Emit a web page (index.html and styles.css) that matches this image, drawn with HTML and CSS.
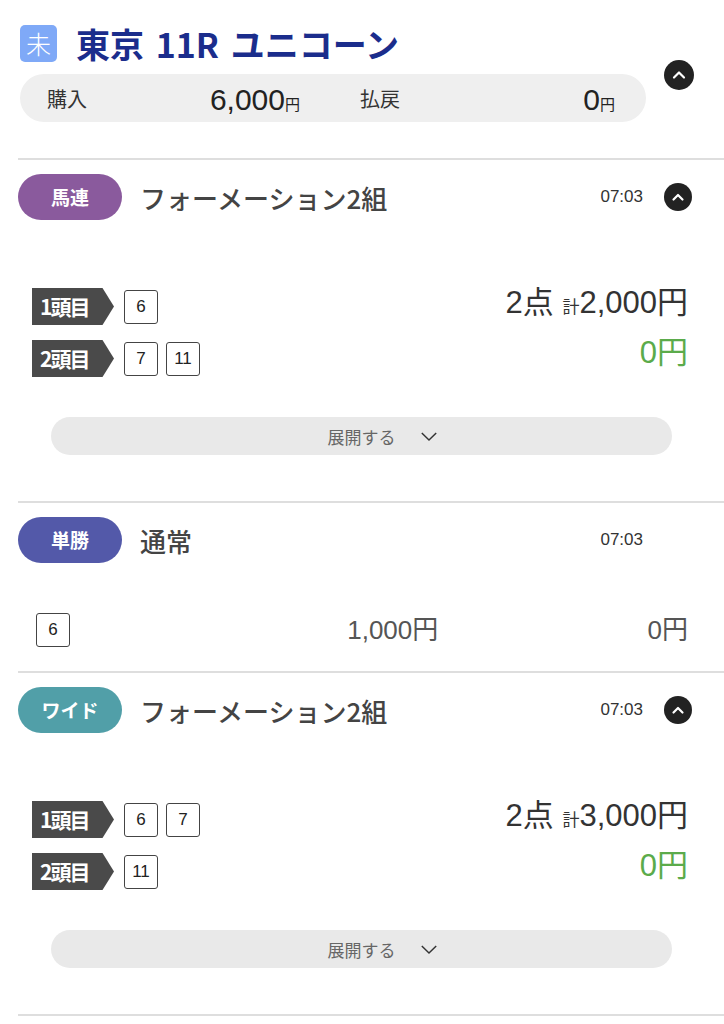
FILE: index.html
```html
<!DOCTYPE html>
<html lang="ja">
<head>
    <meta charset="UTF-8">
    <meta name="viewport" content="width=device-width, initial-scale=1.0">
    <title>東京 11R ユニコーン</title>
    <link rel="stylesheet" href="styles.css">
</head>
<body>

    <div class="race-head">
        <div class="race-main">
            <div class="race-title">
                <span class="status-badge">未</span>
                <h1>東京 11R ユニコーン</h1>
            </div>
            <div class="summary">
                <div class="summary-cell">
                    <span class="summary-label">購入</span>
                    <span class="summary-value">6,000<small>円</small></span>
                </div>
                <div class="summary-cell">
                    <span class="summary-label">払戻</span>
                    <span class="summary-value">0<small>円</small></span>
                </div>
            </div>
        </div>
        <button class="toggle toggle-big">
            <svg viewBox="0 0 30 30" width="30" height="30"><circle cx="15" cy="15" r="15" fill="#222"/><path d="M10 17.5 L15 12.5 L20 17.5" fill="none" stroke="#fff" stroke-width="2.2" stroke-linecap="round" stroke-linejoin="round"/></svg>
        </button>
    </div>

    <!-- 馬連 -->
    <div class="bet">
        <div class="bet-head">
            <span class="bet-type umaren">馬連</span>
            <span class="bet-name">フォーメーション2組</span>
            <span class="bet-time">07:03</span>
            <button class="toggle">
                <svg viewBox="0 0 28 28" width="28" height="28"><circle cx="14" cy="14" r="14" fill="#222"/><path d="M9.5 16.5 L14 12 L18.5 16.5" fill="none" stroke="#fff" stroke-width="2.2" stroke-linecap="round" stroke-linejoin="round"/></svg>
            </button>
        </div>
        <div class="bet-body">
            <div class="picks">
                <div class="pick-row">
                    <span class="pick-tag">1頭目</span>
                    <span class="horse">6</span>
                </div>
                <div class="pick-row">
                    <span class="pick-tag">2頭目</span>
                    <span class="horse">7</span>
                    <span class="horse">11</span>
                </div>
            </div>
            <div class="amounts">
                <div class="amount-total">2点 <small>計</small>2,000円</div>
                <div class="amount-pay">0円</div>
            </div>
        </div>
        <button class="expand">展開する
            <svg viewBox="0 0 20 12" width="18" height="11"><path d="M2 2 L10 10 L18 2" fill="none" stroke="#333" stroke-width="1.6"/></svg>
        </button>
    </div>

    <!-- 単勝 -->
    <div class="bet">
        <div class="bet-head">
            <span class="bet-type tansho">単勝</span>
            <span class="bet-name">通常</span>
            <span class="bet-time">07:03</span>
            <span class="toggle-space"></span>
        </div>
        <div class="single-row">
            <span class="horse">6</span>
            <span class="single-amount">1,000円</span>
            <span class="single-pay">0円</span>
        </div>
    </div>

    <!-- ワイド -->
    <div class="bet">
        <div class="bet-head">
            <span class="bet-type wide">ワイド</span>
            <span class="bet-name">フォーメーション2組</span>
            <span class="bet-time">07:03</span>
            <button class="toggle">
                <svg viewBox="0 0 28 28" width="28" height="28"><circle cx="14" cy="14" r="14" fill="#222"/><path d="M9.5 16.5 L14 12 L18.5 16.5" fill="none" stroke="#fff" stroke-width="2.2" stroke-linecap="round" stroke-linejoin="round"/></svg>
            </button>
        </div>
        <div class="bet-body">
            <div class="picks">
                <div class="pick-row">
                    <span class="pick-tag">1頭目</span>
                    <span class="horse">6</span>
                    <span class="horse">7</span>
                </div>
                <div class="pick-row">
                    <span class="pick-tag">2頭目</span>
                    <span class="horse">11</span>
                </div>
            </div>
            <div class="amounts">
                <div class="amount-total">2点 <small>計</small>3,000円</div>
                <div class="amount-pay">0円</div>
            </div>
        </div>
        <button class="expand">展開する
            <svg viewBox="0 0 20 12" width="18" height="11"><path d="M2 2 L10 10 L18 2" fill="none" stroke="#333" stroke-width="1.6"/></svg>
        </button>
    </div>

</body>
</html>
```

FILE: styles.css
```css
body {
    font-family: 'Liberation Sans', 'Noto Sans CJK JP', sans-serif;
    background-color: #ffffff;
    color: #333;
    margin: 0;
}

button {
    font-family: inherit;
    border: none;
    background: none;
    padding: 0;
    cursor: pointer;
}

/* Race header */
.race-head {
    display: flex;
    align-items: flex-start;
    height: 133px;
    margin-left: 18px;
    padding: 25px 30px 0 2px;
    border-bottom: 2px solid #dedede;
}

.race-main {
    width: 626px;
}

.race-title {
    display: flex;
    align-items: center;
    gap: 19px;
    height: 37px;
}

.status-badge {
    width: 37px;
    height: 37px;
    border-radius: 5px;
    background-color: #7fa9f7;
    color: #fff;
    font-family: 'Noto Sans CJK JP', sans-serif;
    font-size: 25px;
    font-weight: 300;
    line-height: 37px;
    text-align: center;
}

h1 {
    margin: 0;
    font-family: 'Noto Sans CJK JP', sans-serif;
    font-size: 34px;
    font-weight: 700;
    color: #1b2d8c;
    line-height: 37px;
    word-spacing: 4px;
}

.summary {
    margin-top: 12px;
    height: 48px;
    border-radius: 24px;
    background-color: #efefef;
    display: grid;
    grid-template-columns: 253px 255px;
    column-gap: 60px;
    padding: 0 31px 0 27px;
}

.summary-cell {
    display: flex;
    justify-content: space-between;
    align-items: center;
}

.summary-label {
    font-family: 'Noto Sans CJK JP', sans-serif;
    font-size: 20px;
    color: #333;
}

.summary-value {
    font-size: 30px;
    color: #222;
    padding-top: 4px;
}

.summary-value small {
    font-family: 'Noto Sans CJK JP', sans-serif;
    font-size: 15px;
}

.toggle {
    width: 28px;
    height: 28px;
}

.toggle svg {
    display: block;
}

.toggle-big {
    width: 30px;
    height: 30px;
    margin: 35px 0 0 18px;
}

.toggle-space {
    width: 28px;
}

/* Bet blocks */
.bet {
    margin-left: 18px;
    border-bottom: 2px solid #dedede;
    padding: 14px 32px 0 0;
}

.bet-head {
    display: flex;
    align-items: center;
    height: 46px;
}

.bet-type {
    width: 104px;
    height: 46px;
    border-radius: 23px;
    color: #fff;
    font-family: 'Noto Sans CJK JP', sans-serif;
    font-size: 19px;
    font-weight: 700;
    line-height: 46px;
    text-align: center;
}

.umaren { background-color: #8a5a9d; }
.tansho { background-color: #5359a9; }
.wide { background-color: #519fa8; }

.bet-name {
    margin-left: 18px;
    flex: 1;
    font-family: 'Noto Sans CJK JP', sans-serif;
    font-size: 26px;
    font-weight: 500;
    color: #444;
}

.bet-time {
    font-size: 17px;
    color: #333;
    margin-right: 21px;
}

.bet-body {
    display: flex;
    justify-content: space-between;
    padding: 68px 4px 0 14px;
}

.picks {
    display: flex;
    flex-direction: column;
    gap: 15px;
}

.pick-row {
    display: flex;
    align-items: center;
    gap: 8px;
}

.pick-tag {
    width: 82px;
    height: 37px;
    margin-right: 2px;
    background-color: #4a4a4a;
    color: #fff;
    font-family: 'Noto Sans CJK JP', sans-serif;
    font-size: 21px;
    font-weight: 700;
    line-height: 37px;
    padding-left: 8px;
    box-sizing: border-box;
    letter-spacing: -2px;
    clip-path: polygon(0 0, 86% 0, 100% 50%, 86% 100%, 0 100%);
}

.horse {
    width: 34px;
    height: 34px;
    box-sizing: border-box;
    border: 1px solid #444;
    border-radius: 3px;
    font-size: 17px;
    line-height: 32px;
    text-align: center;
    color: #222;
}

.amounts {
    text-align: right;
}

.amount-total {
    font-size: 31px;
    color: #333;
    line-height: 30px;
}

.amount-total small {
    font-family: 'Noto Sans CJK JP', sans-serif;
    font-size: 17px;
}

.amount-pay {
    margin-top: 16px;
    font-size: 31px;
    color: #5bab4b;
    line-height: 32px;
}

.expand {
    display: flex;
    align-items: center;
    justify-content: center;
    gap: 24px;
    width: 621px;
    height: 38px;
    margin: 40px 0 46px 33px;
    padding-left: 42px;
    border-radius: 19px;
    background-color: #e9e9e9;
    font-family: 'Noto Sans CJK JP', sans-serif;
    font-size: 17px;
    color: #666;
}

.single-row {
    display: flex;
    align-items: center;
    justify-content: space-between;
    height: 34px;
    padding: 50px 4px 24px 18px;
}

.single-amount {
    font-size: 26px;
    line-height: 34px;
    color: #555;
    margin-left: 68px;
}

.single-pay {
    font-size: 26px;
    line-height: 34px;
    color: #555;
}
```
